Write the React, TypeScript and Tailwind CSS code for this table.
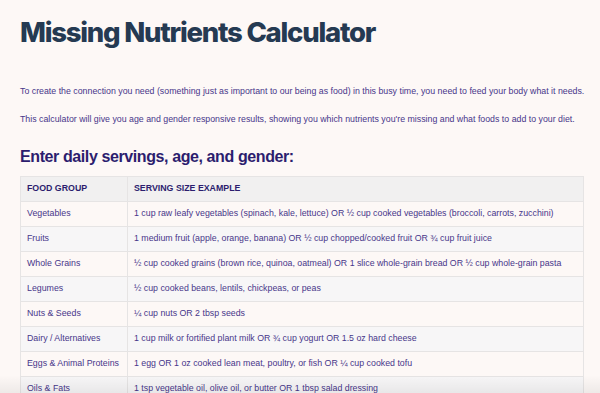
const rows: [string, string][] = [
  ['Vegetables', '1 cup raw leafy vegetables (spinach, kale, lettuce) OR ½ cup cooked vegetables (broccoli, carrots, zucchini)'],
  ['Fruits', '1 medium fruit (apple, orange, banana) OR ½ cup chopped/cooked fruit OR ¾ cup fruit juice'],
  ['Whole Grains', '½ cup cooked grains (brown rice, quinoa, oatmeal) OR 1 slice whole-grain bread OR ½ cup whole-grain pasta'],
  ['Legumes', '½ cup cooked beans, lentils, chickpeas, or peas'],
  ['Nuts & Seeds', '¼ cup nuts OR 2 tbsp seeds'],
  ['Dairy / Alternatives', '1 cup milk or fortified plant milk OR ¾ cup yogurt OR 1.5 oz hard cheese'],
  ['Eggs & Animal Proteins', '1 egg OR 1 oz cooked lean meat, poultry, or fish OR ¼ cup cooked tofu'],
  ['Oils & Fats', '1 tsp vegetable oil, olive oil, or butter OR 1 tbsp salad dressing'],
];

export default function App() {
  return (
    <div className="relative h-[393px] w-[600px] overflow-hidden bg-[#fdf8f6]">
      <div className="px-5 pt-[12px]">
        <h1 className="whitespace-nowrap font-['Inter',sans-serif] text-[27.5px] font-extrabold leading-[40px] tracking-[-0.045em] text-[#253a52]">
          Missing Nutrients Calculator
        </h1>
        <div className="mt-[34px] whitespace-nowrap font-['Liberation_Sans',Arial,sans-serif] text-[8.8px] leading-[11px] text-[#47368a]">
          <p>To create the connection you need (something just as important to our being as food) in this busy time, you need to feed your body what it needs.</p>
          <p className="mt-[17px]">This calculator will give you age and gender responsive results, showing you which nutrients you're missing and what foods to add to your diet.</p>
        </div>
        <h2 className="mt-[22px] whitespace-nowrap font-['Liberation_Sans',Arial,sans-serif] text-[16px] font-bold leading-[20px] tracking-[-0.025em] text-[#2c1d6e]">
          Enter daily servings, age, and gender:
        </h2>
        <table className="mt-[9px] w-[564px] border-collapse border border-[#e6e4e4] font-['Liberation_Sans',Arial,sans-serif] text-[8.8px]">
          <thead>
            <tr className="bg-[#f1f0f0]">
              <th className="h-[25px] w-[107px] border border-[#e6e4e4] px-[6px] text-left font-bold text-[#2c1d6e]">FOOD GROUP</th>
              <th className="h-[25px] border border-[#e6e4e4] px-[6px] text-left font-bold text-[#2c1d6e]">SERVING SIZE EXAMPLE</th>
            </tr>
          </thead>
          <tbody>
            {rows.map(([group, example], i) => (
              <tr key={group} className={i % 2 === 0 ? 'bg-[#fdf8f6]' : 'bg-[#f7f6f7]'}>
                <td className="h-[25px] whitespace-nowrap border border-[#e6e4e4] px-[6px] text-[#47368a]">{group}</td>
                <td className="h-[25px] whitespace-nowrap border border-[#e6e4e4] px-[6px] text-[#47368a]">{example}</td>
              </tr>
            ))}
          </tbody>
        </table>
      </div>
      <div className="pointer-events-none absolute inset-x-0 bottom-0 h-[18px] bg-gradient-to-b from-transparent to-black/[0.06]" />
    </div>
  );
}
